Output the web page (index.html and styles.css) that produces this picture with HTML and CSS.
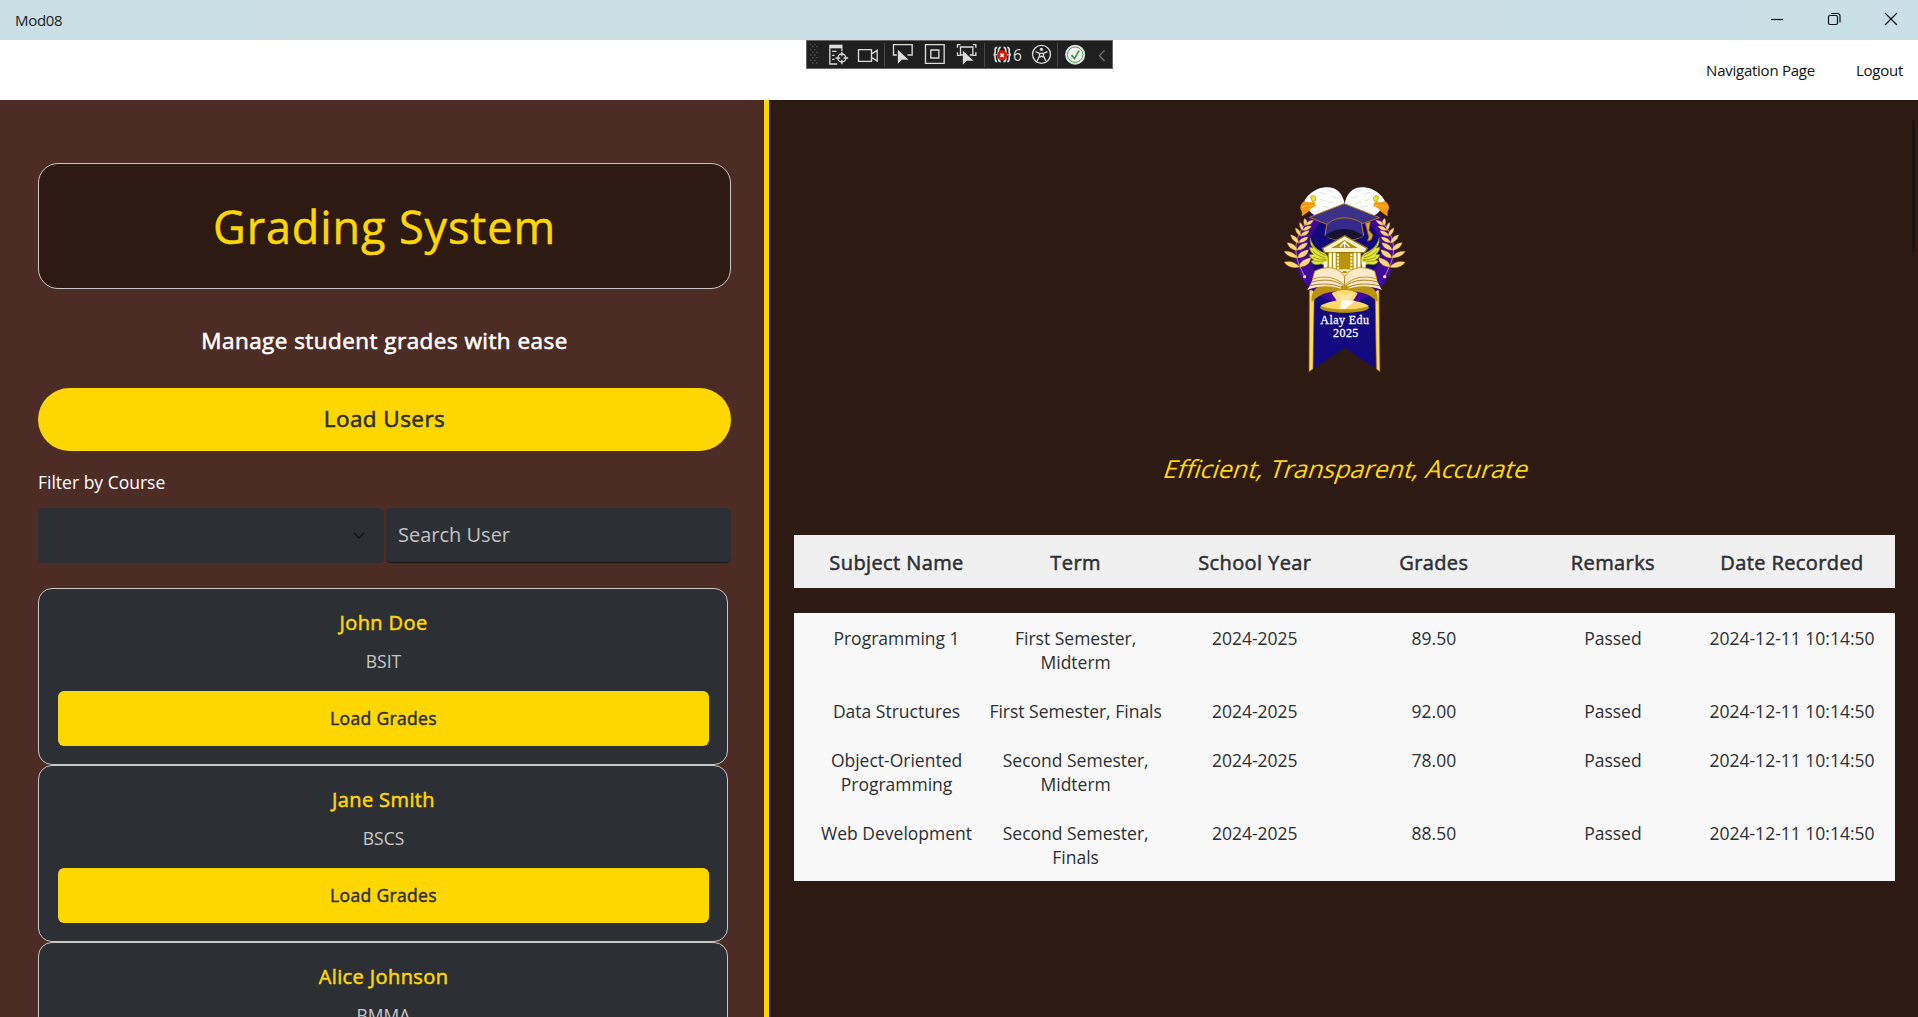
FILE: index.html
```html
<!DOCTYPE html>
<html lang="en">
<head>
<meta charset="utf-8">
<title>Mod08</title>
<link rel="stylesheet" href="styles.css">
</head>
<body>
<header class="titlebar">
  <span class="app-name">Mod08</span>
  <svg class="window-controls" width="150" height="40" viewBox="0 0 150 40" fill="none" stroke="#111" stroke-width="1.2">
    <path d="M3 19.5h12"/>
    <rect x="60.5" y="15.5" width="9" height="9" rx="1.5"/>
    <path d="M63 13.5h6.500a2.500 2.500 0 0 1 2.500 2.500v6.500"/>
    <path d="M117 13l12 12M129 13l-12 12"/>
  </svg>
</header>
<nav class="menu"><span>Navigation Page</span><span>Logout</span></nav>

<div class="debug-bar">
  <svg width="307" height="29" viewBox="0 0 920 87" fill="none" stroke="#dcdcdc" stroke-width="4">
    <g fill="#555" stroke="none">
      <path d="M12 11h4v4h-4zM24 11h4v4h-4zM18 18h4v4h-4zM30 18h4v4h-4zM12 27h4v4h-4zM24 27h4v4h-4zM18 35h4v4h-4zM30 35h4v4h-4zM12 43h4v4h-4zM24 43h4v4h-4zM18 51h4v4h-4zM30 51h4v4h-4zM12 59h4v4h-4zM24 59h4v4h-4zM18 67h4v4h-4zM30 67h4v4h-4z"/>
    </g>
    <path d="M69 14h40v11H69z" fill="#dcdcdc" stroke="none"/>
    <path d="M71 25v47h22M107 25v9M78 34h13M78 46h7M78 58h7"/>
    <circle cx="107" cy="54" r="12"/><path d="M107 36v13M107 59v14M88 54h14M112 54h14"/>
    <path d="M157 29h39v35h-39zM196 42l17-11v32l-17-11"/>
    <path d="M235 9v72M535 9v72M754 9v72" stroke="#484848" stroke-width="3"/>
    <path d="M272 45h-10V14h56v31h-14"/>
    <path d="M275 29v42l12-12h20z" fill="#dcdcdc" stroke="none"/>
    <path d="M358 14h56v56h-56zM374 30h24v24h-24z"/>
    <path d="M454 23V14h9M500 14h9v9M454 37v9h9M500 46h9v-9M471 45h-8V21h37v24h-9"/>
    <path d="M470 32v42l12-12h20z" fill="#dcdcdc" stroke="none"/>
    <path d="M573 22c-7 0-6 6-6 12s-1 10-5 10c4 0 5 5 5 11s0 10 6 10M584 22c-7 0-7 6-7 12s-1 9-4 10c3 1 4 5 4 11s0 10 7 10M603 22c7 0 6 6 6 12s1 10 5 10c-4 0-5 5-5 11s0 10-6 10M592 22c7 0 7 6 7 12s1 9 4 10c-3 1-4 5-4 11s0 10-7 10" stroke-width="5"/>
    <circle cx="588" cy="46" r="15" fill="#e51400" stroke="none"/><path d="M583 41l10 10M593 41l-10 10" stroke="#fff" stroke-width="5"/>
    <circle cx="706" cy="43" r="27"/>
    <circle cx="706" cy="28" r="5" fill="#dcdcdc" stroke="none"/>
    <path d="M688 35l12 5v8l-7 15M724 35l-12 5v8l7 15M700 40h12M701 52l5-4 5 4"/>
    <circle cx="807" cy="44" r="28" fill="#f4f4f4"/><circle cx="807" cy="44" r="23" stroke="#3fa648" stroke-width="3"/>
    <path d="M796 45l9 11 14-24" stroke="#2f9a3a" stroke-width="5"/>
    <path d="M895 31l-15 16 15 16" stroke="#777"/>
  </svg>
  <span class="debug-count">6</span>
</div>

<main class="content">
  <section class="sidebar">
    <div class="title-card"><h1 class="strong">Grading System</h1></div>
    <p class="subtitle strong">Manage student grades with ease</p>
    <div class="load-users strong">Load Users</div>
    <p class="filter-label">Filter by Course</p>
    <div class="filters">
      <div class="picker"><svg width="12" height="8" viewBox="0 0 12 8" fill="none" stroke="#111315" stroke-width="1.300"><path d="M1 1l5 5 5-5"/></svg></div>
      <div class="search">Search User</div>
    </div>
    <div class="users">
      <article class="user"><h2 class="strong">John Doe</h2><p>BSIT</p><div class="load-grades strong">Load Grades</div></article>
      <article class="user"><h2 class="strong">Jane Smith</h2><p>BSCS</p><div class="load-grades strong">Load Grades</div></article>
      <article class="user"><h2 class="strong">Alice Johnson</h2><p>BMMA</p><div class="load-grades strong">Load Grades</div></article>
    </div>
  </section>

  <section class="report">
    <svg class="crest" width="170" height="220" viewBox="0 0 510 660">
      <!-- ribbon -->
      <path d="M152 365h204l4 240-106-72-107 72z" fill="#130a80"/>
      <path d="M148 360h15l-4 237-12 8zM345 360h12l3 245-11-8z" fill="#ffd966" stroke="#7b5a1c" stroke-width="2"/>
      <!-- medallion -->
      <circle cx="254" cy="246" r="151" fill="#3f06a6"/>
      <circle cx="254" cy="246" r="122" fill="#3d0c8c"/>
      <circle cx="254" cy="238" r="108" fill="#120a7c"/>
      <!-- eagles -->
      <g id="eagle">
        <path d="M133 94c4-14 22-29 42-38 22-8 48-6 62 9 10 11 15 24 17 37l-20 22-68 13c-4-3-20-8-33-43z" fill="#fff"/>
        <path d="M133 93c10 5 20 4 31 3l4 13c-6 1-17 6-24 17l-18 13c-2-6 2-12-3-19-5-10 0-19 10-27z" fill="#f99a0c"/>
        <path d="M126 113c9-7 24-8 39-5" fill="none" stroke="#ffc04a" stroke-width="3"/>
        <path d="M176 66l19 6M202 58l17 9M214 78l20 8M184 108l22 4M180 88l16 5M204 96l17 4M186 122l20-2" stroke="#dcdcdc" stroke-width="2.500"/>
        <path d="M152 80l8-4 8 6-2 10-9 3z" fill="#e9ea1c" stroke="#8d8a28" stroke-width="2"/>
      </g>
      <use href="#eagle" transform="translate(508) scale(-1 1)"/>
      <!-- graduation cap -->
      <path d="M203 146l-8 50c20 14 42 14 58 14s40 0 58-14l-9-48-49-8z" fill="#35298b" stroke="#b8860b" stroke-width="3"/>
      <path d="M195 198c30-28 84-28 114 0-28 16-86 16-114 0z" fill="#18122e"/>
      <path d="M148 142L253 101l105 42-51 18c-28-22-78-25-106 2z" fill="#3b3186" stroke="#a9761a" stroke-width="3"/>
      <path d="M316 160l15-5-4 26 12 14-5 14-12 5 4-14-4-16z" fill="#e0a52c" stroke="#7c5a16" stroke-width="2"/>
      <!-- laurels -->
      <g id="laurel">
        <path d="M134 320l-17-36c-17-44-12-86 24-128" fill="none" stroke="#c98f35" stroke-width="3"/>
        <circle cx="134" cy="320" r="5" fill="#ffd966"/>
        <path d="M72 276c18-5 34 0 48 15-20 5-37 1-48-15zM72 244c18-2 33 5 42 20-19 0-33-5-42-20zM81 218c16 0 26 8 32 23-17-1-27-9-32-23zM92 194c15 3 22 11 25 26-15-5-23-13-25-26zM106 173c12 5 17 14 18 27-12-6-18-15-18-27zM119 157c9 6 12 15 10 25-9-6-12-15-10-25zM134 145c10 8 8 17 1 22-5-7-6-15-1-22zM118 291c0-15 13-22 35-29-2 18-14 29-35 29zM113 264c1-15 14-22 33-25-4 17-15 25-33 25zM111 240c4-13 15-21 32-22-5 15-15 22-32 22zM116 218c5-13 15-17 29-17-5 12-15 18-29 17zM121 198c5-12 13-16 27-16-5 12-13 16-27 16zM127 181c7-12 16-15 28-12-7 10-16 14-28 12zM135 166c7-12 16-16 26-15-5 10-14 16-26 15z" fill="#ffd579" stroke="#9c6a2a" stroke-width="1"/>
      </g>
      <use href="#laurel" transform="translate(508) scale(-1 1)"/>
      <!-- wings -->
      <g id="wing">
        <path d="M151 204c5 22 20 37 43 45 15 12 14 27 8 42-10-6-15-9-20-9-16 5-25 0-29-9 3-1 6-2 8-4-7-3-11-8-13-15l12-1c-7-6-11-13-12-22l11 3c-8-9-10-20-8-30z" fill="#e3e63b" stroke="#777d17" stroke-width="2"/>
        <path d="M157 225c10 15 24 25 40 32M158 243c12 12 24 18 39 21M160 261c13 7 25 8 39 7M160 272c14 3 26 2 39 0" fill="none" stroke="#918d19" stroke-width="2.500"/>
      </g>
      <use href="#wing" transform="translate(508) scale(-1 1)"/>
      <!-- temple -->
      <path d="M203 247h101v53H203z" fill="#b8930b"/>
      <path d="M187 235l67-38 68 38-8 13H194z" fill="#fff2cd" stroke="#9c780c" stroke-width="4"/>
      <path d="M214 234l40-24 40 24z" fill="#b8930b"/><path d="M240 231l14-16 14 16M254 217v16" fill="none" stroke="#fff" stroke-width="4"/>
      <path d="M207 248h8v50h-8zM219 248h8v50h-8zM281 248h8v50h-8zM293 248h8v50h-8z" fill="#fff"/>
      <path d="M191 275h11v28h-11zM306 275h11v28h-11z" fill="#fff4d6"/>
      <path d="M234 251v47M274 251v47" stroke="#fff2cd" stroke-width="6" stroke-dasharray="7 3"/>
      <path d="M190 302h128" stroke="#fff2cd" stroke-width="7"/>
      <circle cx="254" cy="310" r="10" fill="#b8930b" stroke="#fff2cd" stroke-width="4"/>
      <!-- book -->
      <path d="M155 396c-2-22 5-37 20-45 30-9 54-11 79 6 25-17 49-15 79-6 15 8 22 23 20 45-26-28-65-37-99-29-34-8-73 1-99 29z" fill="#b8930b"/>
      <path d="M163 309c-2 16-11 36-21 51 38-15 77-15 112 1 35-16 74-16 112-1-10-15-19-35-21-51z" fill="#ffe9cb"/>
      <path d="M164 304c32-18 71-15 90 16 19-31 58-34 90-16l6 23c-36-12-72-6-96 20-24-26-60-32-96-20z" fill="#ffe9cb" stroke="#cc9817" stroke-width="3"/>
      <path d="M153 337c40-12 77-8 101 14M147 348c40-10 78-8 107 9M355 337c-40-12-77-8-101 14M361 348c-40-10-78-8-107 9M254 320v36" fill="none" stroke="#ac7e20" stroke-width="3"/>
      <path d="M243 348h22v13l-11 6-11-6z" fill="#b8930b"/>
      <!-- pedestal -->
      <path d="M215 369c25-12 53-12 78 0-6 14-12 21-15 24H230c-3-7-9-13-15-24z" fill="#ffd76d"/>
      <path d="M230 366c24 13 31 8 50-1-2 14-8 25-14 28h-25z" fill="#ffe3a0"/>
      <path d="M180 413c0-9 39-18 74-18s73 9 73 18c-2 8-30 15-73 15s-71-7-74-15z" fill="#b8930b"/>
      <path d="M181 408c10-8 40-18 73-18s63 10 73 18c-18 7-43 10-73 10s-54-3-73-10z" fill="#ffd86c"/>
      <path d="M243 389l43 4-31 24h-14z" fill="#fffdf2"/>
      <text x="254" y="462" class="crest-name" text-anchor="middle" textLength="146">Alay Edu</text>
      <text x="257" y="502" class="crest-name" text-anchor="middle" textLength="76">2025</text>
    </svg>
    <p class="tagline">Efficient, Transparent, Accurate</p>
    <div class="grade-row grade-head strong"><span>Subject Name</span><span>Term</span><span>School Year</span><span>Grades</span><span>Remarks</span><span>Date Recorded</span></div>
    <div class="grades">
      <div class="grade-row"><span>Programming 1</span><span>First Semester, Midterm</span><span>2024-2025</span><span>89.50</span><span>Passed</span><span>2024-12-11 10:14:50</span></div>
      <div class="grade-row"><span>Data Structures</span><span>First Semester, Finals</span><span>2024-2025</span><span>92.00</span><span>Passed</span><span>2024-12-11 10:14:50</span></div>
      <div class="grade-row"><span>Object-Oriented Programming</span><span>Second Semester, Midterm</span><span>2024-2025</span><span>78.00</span><span>Passed</span><span>2024-12-11 10:14:50</span></div>
      <div class="grade-row"><span>Web Development</span><span>Second Semester, Finals</span><span>2024-2025</span><span>88.50</span><span>Passed</span><span>2024-12-11 10:14:50</span></div>
    </div>
    <div class="scroll-thumb"></div>
  </section>
</main>
</body>
</html>
```
FILE: styles.css
```css
* { box-sizing: border-box; }
h1, h2, p { margin: 0; font-size: inherit; font-weight: 400; }
body {
  margin: 0;
  height: 1017px;
  display: flex;
  flex-direction: column;
  overflow: hidden;
  position: relative;
  font-family: "Open Sans", "Noto Sans", sans-serif;
  font-size: 17.5px;
  line-height: 24px;
}
/* Regular face thickened slightly, lighter than a true semibold */
.strong { letter-spacing: 0.02em; -webkit-text-stroke: 0.026em currentColor; }

.titlebar {
  height: 40px;
  flex: none;
  display: flex;
  align-items: center;
  justify-content: space-between;
  padding-left: 15px;
  background: linear-gradient(90deg, #cadfe5 0%, #cddfe6 50%, #cadee7 88%, #c8e0e5 94%, #cbdfe8 100%);
  color: #1a1a1a;
  font-size: 15px;
  letter-spacing: -0.3px;
}
.menu {
  height: 60px;
  flex: none;
  display: flex;
  align-items: center;
  justify-content: flex-end;
  gap: 41px;
  padding: 0 15px 0 0;
  background: #fff;
  color: #111;
  font-size: 15px;
  letter-spacing: -0.25px;
}
.debug-bar {
  position: absolute;
  left: 806px;
  top: 40px;
  width: 307px;
  height: 29px;
  background: #1f1f1f;
  box-shadow: inset 0 0 0 1px #666;
}
.debug-bar svg { display: block; }
.debug-count {
  position: absolute;
  left: 207px;
  top: 3px;
  color: #dcdcdc;
  font-size: 15.5px;
}

.content { flex: 1; min-height: 0; display: flex; }
.sidebar {
  width: 769px;
  flex: none;
  padding: 63px 33px 0 38px;
  border-right: 5px solid #ffd700;
  background: #4e2c26;
  overflow: hidden;
}
.title-card {
  height: 126px;
  display: flex;
  align-items: center;
  justify-content: center;
  border: 1px solid #c8c8c8;
  border-radius: 20px;
  background: #2c1a13;
  color: #ffd700;
  font-size: 45px;
  line-height: 61px;
}
.title-card .strong { -webkit-text-stroke-width: 0.5px; }
.subtitle {
  margin: 39px 0 35px;
  text-align: center;
  color: #fff;
  font-size: 22.5px;
  line-height: 25px;
}
.load-users {
  height: 63px;
  border-radius: 32px;
  background: #ffd700;
  color: #2c2f33;
  text-align: center;
  font-size: 22.5px;
  line-height: 62px;
}
.filter-label { margin: 19px 0 14px; color: #fff; }
.filters {
  display: grid;
  grid-template-columns: 346px 345px;
  gap: 2px;
  height: 55px;
}
.picker, .search {
  display: flex;
  align-items: center;
  border-radius: 5px;
  background: #2c2f33;
}
.picker { justify-content: flex-end; padding-right: 19px; }
.search {
  padding-left: 12px;
  border-bottom: 1px solid #171512;
  color: #c3c3c4;
  font-size: 20px;
}
.users { margin: 25px 3px 0 0; }
.user {
  height: 177px;
  padding: 20px 18px 0 19px;
  border: 1px solid #c8c8c8;
  border-radius: 14px;
  background: #2c2f33;
  text-align: center;
}
.user h2 { color: #ffd700; font-size: 20px; line-height: 27px; }
.user p { margin: 13px 0 18px; color: #c8c8c8; }
.load-grades {
  height: 55px;
  border-radius: 6px;
  background: #ffd700;
  color: #2c2f33;
  line-height: 55px;
}

.report {
  flex: 1;
  position: relative;
  display: flex;
  flex-direction: column;
  padding: 70px 23px 0 25px;
  background: #2c1a13;
  color: #2c2f33;
}
.crest { align-self: center; flex: none; }
.crest-name {
  fill: #fff;
  font-family: "Liberation Serif", serif;
  font-size: 36px;
  stroke: #fff;
  stroke-width: 0.8px;
}
.tagline {
  align-self: center;
  margin: 61px 0 50px;
  padding-left: 5px;
  color: #ffd700;
  font-size: 25px;
  line-height: 34px;
  transform: skewX(-18deg);
}
.grade-row {
  display: grid;
  grid-template-columns: repeat(6, 179.1px);
  padding: 13px 13px 12px;
  text-align: center;
}
.grade-row span { padding: 0 3px; }
.grade-head {
  height: 53px;
  margin-bottom: 25px;
  padding: 0 13px;
  background: #f0f0f0;
  font-size: 20px;
  line-height: 56px;
}
.grades { height: 268px; background: #f8f8f8; }
.scroll-thumb {
  position: absolute;
  right: 3px;
  top: 20px;
  width: 3px;
  height: 132px;
  border-radius: 2px;
  background: #20120e;
}
```
